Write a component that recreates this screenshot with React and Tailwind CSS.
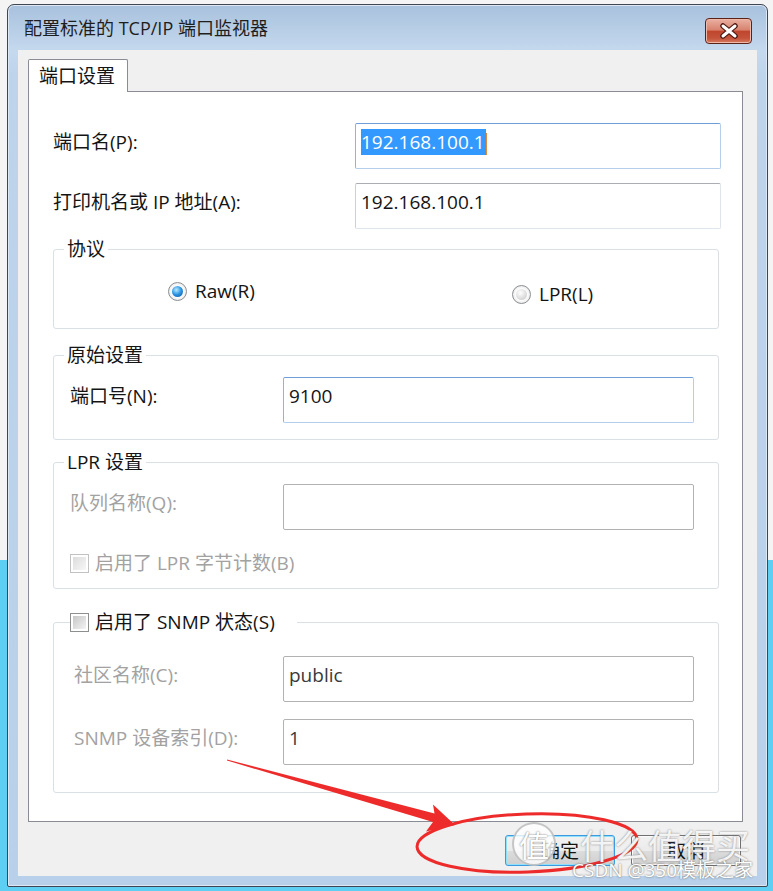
import React from 'react';

const UI_FONT = "font-['Open_Sans','Noto_Sans_CJK_SC',sans-serif]";

// Win7 style textbox borders
const BOX = {
  focus: 'border-[#b3cfec] border-t-[#6f9fd6] border-l-[#8db3e0]',
  plain: 'border-[#dfe5ec] border-t-[#abadb3] border-l-[#cdd0d6]',
  gray: 'border-[#b2b2b2]',
};

function TextBox({ tone, width, children }) {
  return (
    <div className={`h-[46px] ${width} rounded-[2px] border ${BOX[tone]} bg-white pl-[4px] pt-[6px] leading-[24px]`}>
      {children}
    </div>
  );
}

function Radio({ checked }) {
  return (
    <span className="flex h-[19px] w-[19px] shrink-0 items-center justify-center rounded-full border border-[#8c8e90] bg-[radial-gradient(circle_at_50%_50%,#ffffff_45%,#d8d8d8)]">
      {checked ? (
        <span className="h-[11px] w-[11px] rounded-full bg-[radial-gradient(circle_at_40%_35%,#b5ebff,#2a92e0_50%,#0b4f9b)]" />
      ) : (
        <span className="h-[11px] w-[11px] rounded-full bg-[radial-gradient(circle_at_40%_35%,#ffffff,#d9d9d9_65%,#c2c2c2)]" />
      )}
    </span>
  );
}

function CheckBox({ disabled }) {
  return (
    <span
      className={
        disabled
          ? 'flex h-[19px] w-[19px] shrink-0 border border-[#c2c2c2] bg-white p-[2px]'
          : 'flex h-[19px] w-[19px] shrink-0 border border-[#8e8f8f] bg-white p-[2px]'
      }
    >
      <span
        className={
          disabled
            ? 'flex-1 bg-[linear-gradient(135deg,#dcdcdc,#f7f7f7)]'
            : 'flex-1 bg-[linear-gradient(135deg,#c6c6c6,#f4f4f4)]'
        }
      />
    </span>
  );
}

function Legend({ children }) {
  return <legend className="ml-[10px] px-[3px] leading-[24px]">{children}</legend>;
}

export default function App() {
  return (
    <div className={`relative h-[891px] w-[773px] overflow-hidden ${UI_FONT} text-[19px] leading-[24px] text-[#141414]`}>
      {/* desktop behind the dialog */}
      <div className="flex h-full flex-col">
        <div className="h-[560px] bg-[#f4f4f4]" />
        <div className="flex-1 bg-[#5ccff3]" />
      </div>

      {/* dialog window */}
      <div className="absolute left-[7px] top-[4px] flex h-[883px] w-[761px] flex-col rounded-t-[7px] rounded-b-[2px] border border-[#3d4652] bg-[linear-gradient(to_bottom,#a8c1dd_0px,#c5d9ee_46px,#bdd4eb_70px,#b8d0e9_100%)] shadow-[inset_0_0_0_1px_#dde8f4]">
        {/* title bar */}
        <div className="flex h-[45px] items-center justify-between pl-[16px] pr-[15px]">
          <span className="text-[18px] text-[#1e1e1e]">配置标准的 TCP/IP 端口监视器</span>
          <button className="mt-[6px] flex h-[26px] w-[47px] items-center justify-center rounded-[4px] border border-[#5b2318] bg-[linear-gradient(to_bottom,#eab0a2,#d8836f_45%,#c0462e_52%,#c4533a_80%,#d87a60)] shadow-[inset_0_0_0_1px_#f0b8a8]">
            <svg width="20" height="16" viewBox="0 0 20 16">
              <path d="M4 3 L16 13 M16 3 L4 13" stroke="#4a1810" strokeWidth="5.5" strokeLinecap="round" />
              <path d="M4 3 L16 13 M16 3 L4 13" stroke="#ffffff" strokeWidth="3" strokeLinecap="round" />
            </svg>
          </button>
        </div>

        {/* client area */}
        <div className="mx-[10px] flex h-[826px] flex-col bg-[#f0f0f0] pl-[10px] pt-[9px]">
          {/* tab */}
          <div className="relative z-10 -mb-px flex h-[33px] w-[100px] items-center rounded-t-[2px] border border-b-0 border-[#898c95] bg-white pl-[10px]">
            端口设置
          </div>

          {/* tab panel */}
          <div className="flex h-[731px] w-[715px] flex-col border border-[#898c95] bg-white">
            <div className="mt-[31px] flex items-start pl-[24px]">
              <span className="w-[302px] pt-[7px]">端口名(P):</span>
              <TextBox tone="focus" width="w-[366px]">
                <span className="ml-[1px] bg-[#3399ff] pr-[1px] text-white">192.168.100.1</span>
                <span className="inline-block h-[22px] w-px bg-[#e08a3c] align-middle" />
              </TextBox>
            </div>

            <div className="mt-[14px] flex items-start pl-[24px]">
              <span className="w-[302px] pt-[7px]">打印机名或 IP 地址(A):</span>
              <TextBox tone="plain" width="w-[366px]">
                <span className="ml-[1px]">192.168.100.1</span>
              </TextBox>
            </div>

            {/* 协议 */}
            <fieldset className="ml-[24px] mt-[8px] h-[92px] w-[666px] rounded-[3px] border border-[#d9e0e6]">
              <Legend>协议</Legend>
              <div className="mt-[18px] flex items-start pl-[114px]">
                <div className="flex w-[344px] items-center gap-[8px]">
                  <Radio checked />
                  <span>Raw(R)</span>
                </div>
                <div className="mt-[3px] flex items-center gap-[8px]">
                  <Radio />
                  <span>LPR(L)</span>
                </div>
              </div>
            </fieldset>

            {/* 原始设置 */}
            <fieldset className="ml-[24px] mt-[14px] h-[97px] w-[666px] rounded-[3px] border border-[#d9e0e6]">
              <Legend>原始设置</Legend>
              <div className="mt-[10px] flex items-start pl-[16px]">
                <span className="w-[213px] pt-[7px]">端口号(N):</span>
                <TextBox tone="focus" width="w-[411px]">
                  <span className="ml-[1px]">9100</span>
                </TextBox>
              </div>
            </fieldset>

            {/* LPR 设置 */}
            <fieldset className="ml-[24px] mt-[10px] h-[139px] w-[666px] rounded-[3px] border border-[#d9e0e6]">
              <Legend>LPR 设置</Legend>
              <div className="mt-[10px] flex items-start pl-[16px]">
                <span className="w-[213px] pt-[7px] text-[#a2a2a2]">队列名称(Q):</span>
                <TextBox tone="gray" width="w-[411px]" />
              </div>
              <div className="mt-[21px] flex items-center gap-[6px] pl-[16px] text-[#a2a2a2]">
                <CheckBox disabled />
                <span>启用了 LPR 字节计数(B)</span>
              </div>
            </fieldset>

            {/* SNMP */}
            <fieldset className="ml-[24px] mt-[21px] h-[183px] w-[666px] rounded-[3px] border border-[#d9e0e6]">
              <legend className="ml-[16px] pr-[22px] leading-[24px]">
                <span className="flex items-center gap-[6px]">
                  <CheckBox />
                  <span>启用了 SNMP 状态(S)</span>
                </span>
              </legend>
              <div className="mt-[22px] flex items-start pl-[20px]">
                <span className="w-[209px] pt-[7px] text-[#a2a2a2]">社区名称(C):</span>
                <TextBox tone="gray" width="w-[411px]">
                  <span className="ml-[1px] text-[#3a3a3a]">public</span>
                </TextBox>
              </div>
              <div className="mt-[17px] flex items-start pl-[20px]">
                <span className="w-[209px] pt-[7px] text-[#a2a2a2]">SNMP 设备索引(D):</span>
                <TextBox tone="gray" width="w-[411px]">
                  <span className="ml-[1px] text-[#3a3a3a]">1</span>
                </TextBox>
              </div>
            </fieldset>
          </div>

          {/* buttons */}
          <div className="mt-[13px] flex justify-end gap-[16px] pr-[16px]">
            <button className="h-[31px] w-[110px] rounded-[3px] border border-[#3c9be0] bg-[linear-gradient(to_bottom,#f2f2f2_0%,#ebebeb_50%,#dddddd_51%,#cfcfcf_100%)] shadow-[inset_0_0_0_1px_#8ee0fb]">
              确定
            </button>
            <button className="h-[31px] w-[110px] rounded-[3px] border border-[#707070] bg-[linear-gradient(to_bottom,#f2f2f2_0%,#ebebeb_50%,#dddddd_51%,#cfcfcf_100%)] shadow-[inset_0_0_0_1px_#fcfcfc]">
              取消
            </button>
          </div>
        </div>
      </div>

      {/* red annotation */}
      <svg className="pointer-events-none absolute left-0 top-0" width="773" height="891" viewBox="0 0 773 891">
        <polygon
          points="227,759.5 434.5,813.5 433,804.5 455,825 426,831.5 433,822 227,760.5"
          fill="#ee2b2b"
        />
        <ellipse
          cx="527"
          cy="843"
          rx="110"
          ry="29"
          fill="none"
          stroke="#ee2b2b"
          strokeWidth="3"
          transform="rotate(-2 527 843)"
        />
      </svg>

      {/* watermark */}
      <div className="pointer-events-none absolute left-[512px] top-[822px] flex h-[44px] w-[44px] items-center justify-center rounded-full border-2 border-[#a0a0a0]/60 bg-white/80 font-['Noto_Sans_CJK_SC',sans-serif] text-[30px] leading-none text-white [text-shadow:0_0_2px_#666]">
        值
      </div>
      <div className="pointer-events-none absolute left-[580px] top-[828px] font-['Noto_Sans_CJK_SC',sans-serif] text-[34px] leading-[34px] text-white/90 [text-shadow:0_0_2px_#777]">
        什么值得买
      </div>
      <div className="pointer-events-none absolute left-[572px] top-[860px] text-[19px] leading-[20px] text-white [text-shadow:0_0_2px_#555]">
        CSDN @350模板之家
      </div>
    </div>
  );
}
